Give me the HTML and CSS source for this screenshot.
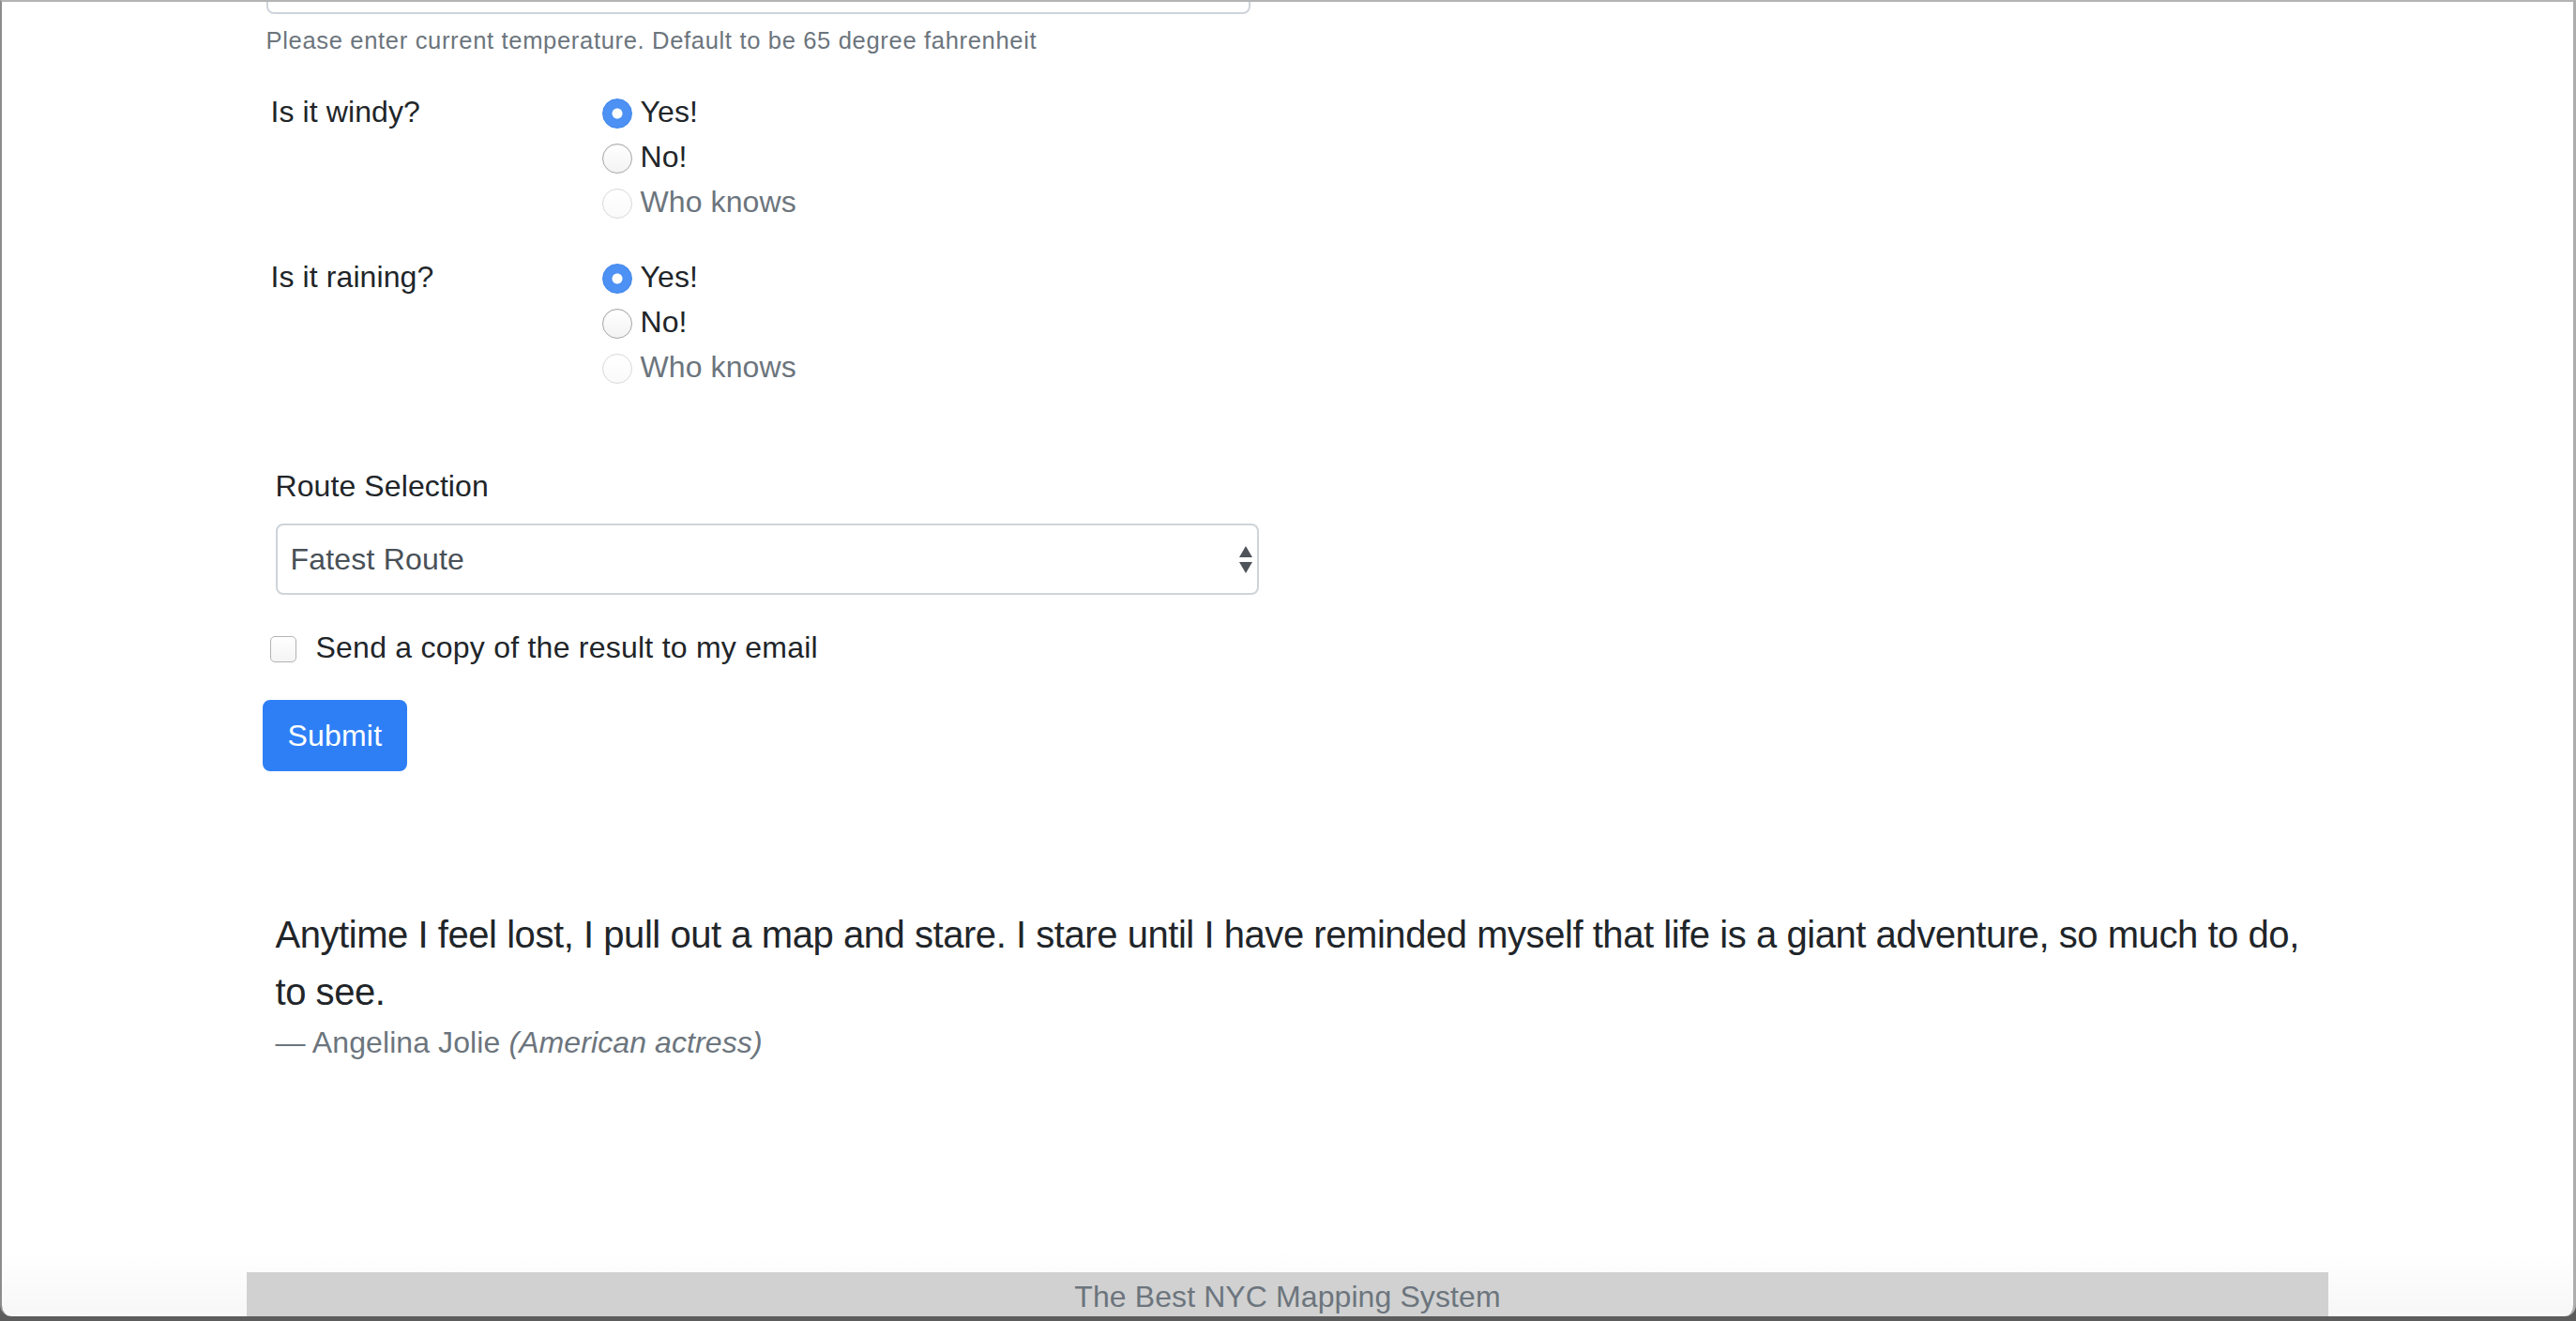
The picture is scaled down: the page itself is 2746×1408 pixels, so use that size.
FILE: index.html
```html
<!DOCTYPE html>
<html lang="en">
<head>
<meta charset="utf-8">
<title>The Best NYC Mapping System</title>
<link rel="stylesheet" href="styles.css">
</head>
<body>
<div class="window">
  <main class="main">
    <div class="container">
      <form class="form">
        <div class="temp-group">
          <input class="form-control" type="text" aria-label="Current temperature">
          <small class="form-text">Please enter current temperature. Default to be 65 degree fahrenheit</small>
        </div>

        <fieldset class="radio-group">
          <div class="group-label">Is it windy?</div>
          <div class="options">
            <label class="check"><input class="radio" type="radio" name="windy" checked><span>Yes!</span></label>
            <label class="check"><input class="radio" type="radio" name="windy"><span>No!</span></label>
            <label class="check disabled"><input class="radio" type="radio" name="windy" disabled><span>Who knows</span></label>
          </div>
        </fieldset>

        <fieldset class="radio-group">
          <div class="group-label">Is it raining?</div>
          <div class="options">
            <label class="check"><input class="radio" type="radio" name="rain" checked><span>Yes!</span></label>
            <label class="check"><input class="radio" type="radio" name="rain"><span>No!</span></label>
            <label class="check disabled"><input class="radio" type="radio" name="rain" disabled><span>Who knows</span></label>
          </div>
        </fieldset>

        <div class="route-group">
          <label class="route-label" for="route">Route Selection</label>
          <div class="select-wrap">
            <select id="route" class="select">
              <option>Fatest Route</option>
              <option>Shortest Route</option>
            </select>
            <svg class="select-arrows" viewBox="0 0 16 30" width="16" height="30" aria-hidden="true">
              <path d="M8 0 L15 12 L1 12 Z" fill="#4f545b"/>
              <path d="M1 17 L15 17 L8 29 Z" fill="#4f545b"/>
            </svg>
          </div>
        </div>

        <label class="email-check"><input class="checkbox" type="checkbox"><span>Send a copy of the result to my email</span></label>

        <button class="btn-submit" type="submit">Submit</button>
      </form>

      <blockquote class="quote">
        <p>Anytime I feel lost, I pull out a map and stare. I stare until I have reminded myself that life is a giant adventure, so much to do, to see.</p>
        <footer class="quote-footer">— Angelina Jolie <cite>(American actress)</cite></footer>
      </blockquote>
    </div>
  </main>
  <footer class="site-footer">The Best NYC Mapping System</footer>
</div>
</body>
</html>
```

FILE: styles.css
```css
* { box-sizing: border-box; }

html, body {
  margin: 0;
  padding: 0;
}

body {
  height: 1408px;
  overflow: hidden;
  background: #5c5c5c;
  font-family: "Liberation Sans", Arial, sans-serif;
  color: #212529;
  letter-spacing: 0.006em;
}

.window {
  height: 1403px;
  display: flex;
  flex-direction: column;
  overflow: hidden;
  background: linear-gradient(#ffffff calc(100% - 70px), #f7f7f7);
  border-top: 2px solid #b4b4b4;
  border-left: 2px solid #8c8c8c;
  border-right: 3px solid #adadad;
  border-radius: 0 0 12px 12px;
}

.main {
  flex: 1;
  overflow: hidden;
}

.container {
  width: 2220px;
  margin: 0 auto;
}

.form {
  margin-top: -63px;
  padding-left: 21px;
}

/* temperature group */
.temp-group {
  margin-bottom: 33px;
}

.form-control {
  display: block;
  width: 1049px;
  height: 76px;
  border: 2px solid #ced4da;
  border-radius: 8px;
  background: #fff;
}

.form-text {
  display: block;
  margin-top: 9px;
  font-size: 25.6px;
  line-height: 38.4px;
  letter-spacing: 0.64px;
  color: #6c757d;
}

/* radio groups */
.radio-group {
  display: flex;
  margin: 0 0 32px;
  padding: 0;
  border: 0;
  min-width: 0;
}

.group-label {
  width: 358px;
  padding-left: 5px;
  font-size: 32px;
  line-height: 48px;
}

.options {
  display: flex;
  flex-direction: column;
}

.check {
  display: flex;
  align-items: flex-start;
  font-size: 32px;
  line-height: 48px;
}

.check.disabled {
  color: #6c757d;
}

.radio {
  -webkit-appearance: none;
  appearance: none;
  flex: none;
  width: 32px;
  height: 32px;
  margin: 10px 9px 0 0;
  border-radius: 50%;
  border: 1px solid #a6a6a6;
  background: linear-gradient(#ffffff, #f3f3f3);
  box-shadow: inset 0 1px 1px rgba(0, 0, 0, 0.06);
}

.radio:checked {
  border-color: #3f86ec;
  background: radial-gradient(circle, #ffffff 0 5px, #4c91f3 6px);
  box-shadow: none;
}

.radio:disabled {
  border-color: #d9d9d9;
  background: linear-gradient(#ffffff, #fafafa);
  box-shadow: none;
}

/* route select */
.route-group {
  margin-top: 79px;
  margin-bottom: 32px;
  padding-left: 10px;
}

.route-label {
  display: block;
  font-size: 32px;
  line-height: 48px;
  margin-bottom: 16px;
}

.select-wrap {
  position: relative;
  width: 1048px;
}

.select {
  -webkit-appearance: none;
  appearance: none;
  display: block;
  width: 100%;
  height: 76px;
  padding: 0 40px 0 14px;
  border: 2px solid #ced4da;
  border-radius: 8px;
  background: #fff;
  font-family: inherit;
  font-size: 32px;
  letter-spacing: 0.006em;
  color: #495057;
}

.select-arrows {
  position: absolute;
  right: 6px;
  top: 24px;
}

/* checkbox */
.email-check {
  display: flex;
  align-items: flex-start;
  padding-left: 4px;
  margin-bottom: 32px;
  font-size: 32px;
  line-height: 48px;
  letter-spacing: 0.24px;
}

.checkbox {
  -webkit-appearance: none;
  appearance: none;
  flex: none;
  width: 28px;
  height: 28px;
  margin: 12px 21px 0 0;
  border: 1px solid #b3b3b3;
  border-radius: 5px;
  background: linear-gradient(#ffffff, #f4f4f4);
}

/* button */
.btn-submit {
  display: block;
  margin-left: -4px;
  padding: 12px 25px;
  border: 2px solid #2e7ff6;
  border-radius: 8px;
  background: #2e7ff6;
  color: #fff;
  font-family: inherit;
  font-size: 32px;
  line-height: 48px;
  letter-spacing: 0.006em;
}

/* quote */
.quote {
  margin: 144px 30px 0 31px;
}

.quote p {
  margin: 0;
  font-size: 40px;
  line-height: 61px;
  letter-spacing: -0.45px;
}

.quote-footer {
  font-size: 32px;
  line-height: 46px;
  color: #6c757d;
}

.quote-footer cite {
  font-style: italic;
}

/* footer */
.site-footer {
  flex: none;
  width: 2219px;
  height: 47px;
  margin: 0 auto;
  padding-top: 2px;
  background: #d1d1d1;
  color: #6c757d;
  text-align: center;
  font-size: 32px;
  line-height: 48px;
  overflow: hidden;
}
```
